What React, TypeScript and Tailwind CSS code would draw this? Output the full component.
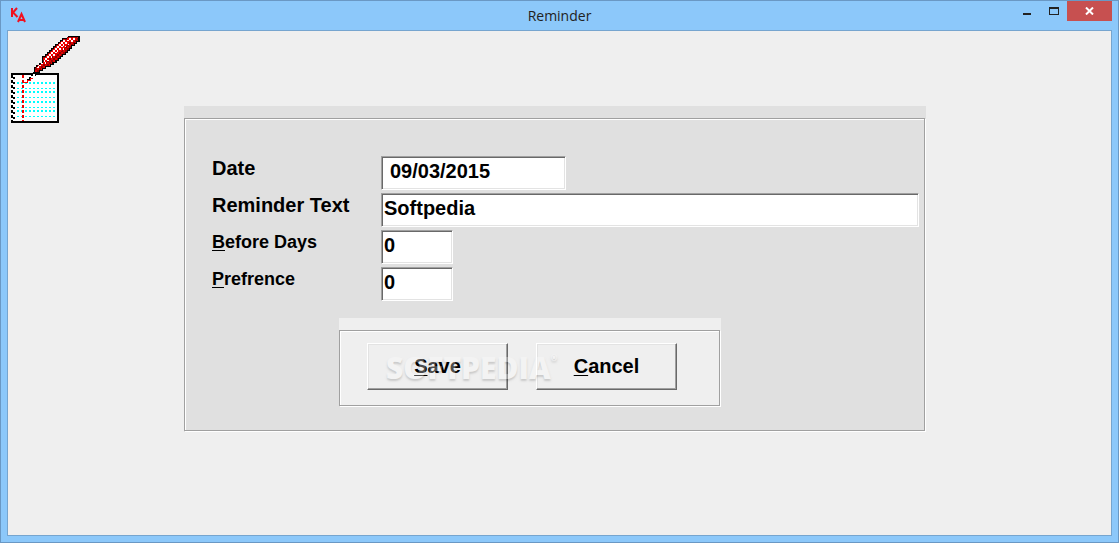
import { useState } from "react";

const insetField =
  "h-[34px] border border-t-[#a0a0a0] border-l-[#a0a0a0] border-r-white border-b-white bg-white pb-1 text-xl leading-6 font-bold text-black shadow-[inset_1px_1px_0_#696969,inset_-1px_-1px_0_#e3e3e3] outline-none";

const raisedButton =
  "h-[47px] w-[141px] border border-t-white border-l-white border-r-[#696969] border-b-[#696969] bg-[#efefef] pb-0.5 text-xl font-bold text-black shadow-[inset_-1px_-1px_0_#a0a0a0,inset_1px_1px_0_#e3e3e3]";

const etchedFrame =
  "mr-px mb-px border border-[#a0a0a0] shadow-[inset_1px_1px_0_#fff,1px_1px_0_#fff]";

const accessKey = "underline decoration-1 underline-offset-2";

function NotepadIcon() {
  const lines = [47, 52, 56, 61, 66, 71, 75, 80];
  return (
    <svg width="72" height="90" viewBox="0 0 72 90" shapeRendering="crispEdges" aria-hidden="true">
      <defs>
        <pattern id="light" width="4" height="4" patternUnits="userSpaceOnUse">
          <rect width="4" height="4" fill="#f00000" />
          <rect width="2" height="2" fill="#fff" />
          <rect x="2" y="2" width="2" height="2" fill="#fff" />
        </pattern>
        <pattern id="dark" width="4" height="4" patternUnits="userSpaceOnUse">
          <rect width="4" height="4" fill="#e00000" />
          <rect width="2" height="2" fill="#900000" />
          <rect x="2" y="2" width="2" height="2" fill="#900000" />
        </pattern>
      </defs>

      {/* page, spiral and rulings */}
      <rect x="0" y="38" width="47" height="48" fill="#fff" />
      <path d="M0 38h48M47 37v50M2 86h46" stroke="#000" strokeWidth="2" />
      <path d="M1 39v48" stroke="#000" strokeWidth="2" strokeDasharray="3 2" />
      <path d="M3 41v45" stroke="#000" strokeWidth="2" strokeDasharray="2 3" />
      {lines.map((y, i) => (
        <path
          key={y}
          d={i % 2 ? `M6 ${y}.5h39` : `M6 ${y}h39`}
          stroke="#00ffff"
          strokeWidth={i % 2 ? 1 : 2}
          strokeDasharray="2 2"
        />
      ))}
      <path d="M12 39v46" stroke="#f00000" strokeWidth="2" strokeDasharray="3 2" />

      {/* pen */}
      <path d="M13 46h3v-2h3v-2h3" stroke="#f00000" fill="none" />
      <path d="M16 43h2v-2h2v-2h2v-3h3v4h-3v2h-3v2h-3z" fill="#000" />
      <path d="M18 42h2v-2h2v-2h2v2h-2v2h-4z" fill="#fff" />
      <path
        d="M57 0H69V6H66V8H64V10H61V13H59V15H57V17H55V19H52V21H50V23H48V25H46V27H43V29H40V31H35V33H32V35H29V37H23V31H25V29H28V27H31V20H34V18H36V16H38V14H40V12H42V10H44V8H47V6H49V4H51V2H57Z"
        fill="#000"
      />
      <path
        d="M56 1H67V5H65V7H63V9H60V12H58V14H56V16H54V18H51V20H49V22H47V24H44V26H41V28H39V30H34V32H31V34H28V36H24V32H26V30H29V28H32V21H35V19H37V17H39V15H41V13H43V11H45V9H48V7H50V5H52V3H56Z"
        fill="url(#dark)"
      />
      <path
        d="M57 2H64V4H62V6H58V9H55V11H53V14H50V16H47V18H44V20H41V22H38V25H35V28H31V30H28V32H25V31H27V29H30V27H33V22H35V20H37V18H39V16H41V14H43V12H45V10H47V8H49V6H52V4H57Z"
        fill="url(#light)"
      />
      <path d="M59 5h-3v3h-3v3h-3v3h-3v3h-3" stroke="#f00000" fill="none" />
    </svg>
  );
}

function TitleBar() {
  return (
    <header className="grid h-[29px] grid-cols-[1fr_auto_1fr] items-start">
      <svg width="20" height="24" className="ml-2" stroke="#f01020" fill="none" strokeWidth="2" aria-hidden="true">
        <path d="M3 7v9M8 7L4 11.5L8.5 16M9 21L12.5 13L16 21M10 19h5" />
      </svg>
      <h1 className="pt-1 font-['Open_Sans',sans-serif] text-sm leading-[22px] text-[#222]">Reminder</h1>
      <div className="flex justify-end pr-1.5">
        <button aria-label="Minimize" className="flex h-5 w-7 justify-center pt-3">
          <span className="h-0.5 w-2 bg-[#222]" />
        </button>
        <button aria-label="Maximize" className="flex h-5 w-[26px] justify-center pt-1.5">
          <span className="h-2 w-2.5 border border-t-2 border-[#222]" />
        </button>
        <button aria-label="Close" className="flex h-5 w-[45px] items-center justify-center bg-[#c75050]">
          <svg width="9" height="8" stroke="#fff" strokeWidth="2" aria-hidden="true">
            <path d="M1 0.5L8 7.5M8 0.5L1 7.5" />
          </svg>
        </button>
      </div>
    </header>
  );
}

export default function App() {
  const [date, setDate] = useState("09/03/2015");
  const [text, setText] = useState("Softpedia");
  const [days, setDays] = useState("0");
  const [preference, setPreference] = useState("0");

  return (
    <div className="flex min-h-screen flex-col border border-[#6a98c4] bg-[#8cc8fa] font-['Liberation_Sans',Arial,sans-serif]">
      <TitleBar />
      <main className="mx-1.5 mb-1.5 grid flex-1 grid-cols-[1fr_742px_1fr] items-start border border-[#76a5cf] bg-[#efefef] pr-[9px]">
        <div className="pt-[5px] pl-[3px]">
          <NotepadIcon />
        </div>
        <form className="mt-[75px] bg-[#e0e0e0] pt-3" onSubmit={(e) => e.preventDefault()}>
          <div className={`${etchedFrame} pt-[37px] pr-[5px] pb-[23px] pl-[27px]`}>
            <div className="grid grid-cols-[169px_1fr] gap-y-[3px]">
              <label htmlFor="date" className="text-xl leading-6 font-bold">Date</label>
              <input id="date" value={date} onChange={(e) => setDate(e.target.value)} className={`${insetField} w-[185px] pl-2`} />
              <label htmlFor="text" className="text-xl leading-6 font-bold">Reminder Text</label>
              <input id="text" value={text} onChange={(e) => setText(e.target.value)} className={`${insetField} w-full pl-0.5`} />
              <label htmlFor="days" className="text-lg leading-6 font-bold">
                <span className={accessKey}>B</span>efore Days
              </label>
              <input id="days" value={days} onChange={(e) => setDays(e.target.value)} className={`${insetField} w-[72px] pl-0.5`} />
              <label htmlFor="preference" className="text-lg leading-6 font-bold">
                <span className={accessKey}>P</span>refrence
              </label>
              <input id="preference" value={preference} onChange={(e) => setPreference(e.target.value)} className={`${insetField} w-[72px] pl-0.5`} />
            </div>
            <div className="mt-[17px] ml-[127px] w-[382px] bg-[#efefef] pt-3">
              <div className={`${etchedFrame} relative flex gap-7 px-[27px] pt-3 pb-[15px]`}>
                <button type="submit" className={raisedButton}>
                  <span className={accessKey}>S</span>ave
                </button>
                <button type="button" className={raisedButton}>
                  <span className={accessKey}>C</span>ancel
                </button>
                <div className="pointer-events-none absolute top-[19px] left-[46px] flex font-['Open_Sans',sans-serif] text-3xl leading-9 font-extrabold text-white opacity-30 [text-shadow:0_2px_2px_rgb(0_0_0/0.5)]">
                  SOFTPEDIA
                  <span className="text-[8px] leading-4">®</span>
                </div>
              </div>
            </div>
          </div>
        </form>
      </main>
    </div>
  );
}
